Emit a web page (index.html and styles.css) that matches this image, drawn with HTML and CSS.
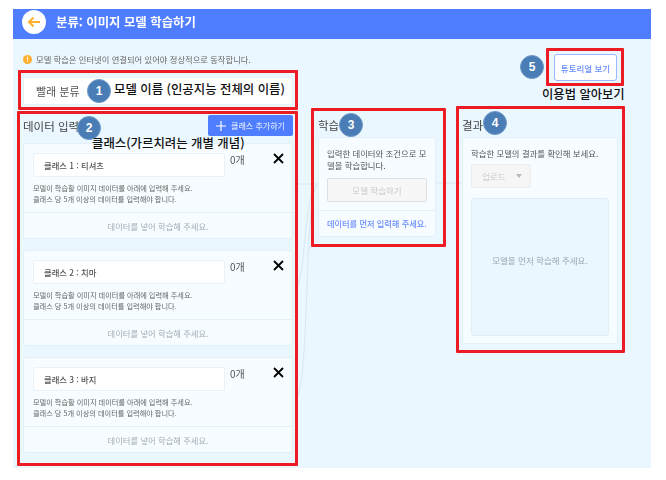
FILE: index.html
```html
<!DOCTYPE html>
<html lang="ko">
<head>
<meta charset="utf-8">
<title>분류: 이미지 모델 학습하기</title>
<link rel="stylesheet" href="styles.css">
</head>
<body>
<div class="page">
  <div class="app">
    <header class="topbar">
      <span class="back">
        <svg width="14" height="12" viewBox="0 0 14 12"><path d="M13 6H2M6.500 1.500 2 6l4.500 4.500" fill="none" stroke="#ffb02e" stroke-width="2"/></svg>
      </span>
      <h1 class="title">분류: 이미지 모델 학습하기</h1>
    </header>
    <div class="intro">
      <div class="intro-left">
        <p class="notice"><span class="warn">!</span>모델 학습은 인터넷이 연결되어 있어야 정상적으로 동작합니다.</p>
        <div class="name-card">빨래 분류</div>
      </div>
      <button class="tutorial">튜토리얼 보기</button>
    </div>
    <div class="columns">
      <section class="col-data">
        <div class="data-head">
          <h2 class="col-title">데이터 입력</h2>
          <button class="add"><svg width="10" height="10" viewBox="0 0 10 10"><path d="M5 0V10M0 5H10" stroke="#fff" stroke-width="1.200"/></svg>클래스 추가하기</button>
        </div>
        <article class="class-card">
          <div class="class-top">
            <div class="class-row">
              <div class="class-input">클래스 1 : 티셔츠</div>
              <span class="count">0개</span>
              <svg class="close" width="13" height="13" viewBox="0 0 13 13"><path d="M2 2l9 9M11 2l-9 9" stroke="#000" stroke-width="1.800"/></svg>
            </div>
            <p class="help">모델이 학습할 이미지 데이터를 아래에 입력해 주세요.<br>클래스 당 5개 이상의 데이터를 입력해야 합니다.</p>
          </div>
          <div class="class-foot">데이터를 넣어 학습해 주세요.</div>
        </article>
        <article class="class-card">
          <div class="class-top">
            <div class="class-row">
              <div class="class-input">클래스 2 : 치마</div>
              <span class="count">0개</span>
              <svg class="close" width="13" height="13" viewBox="0 0 13 13"><path d="M2 2l9 9M11 2l-9 9" stroke="#000" stroke-width="1.800"/></svg>
            </div>
            <p class="help">모델이 학습할 이미지 데이터를 아래에 입력해 주세요.<br>클래스 당 5개 이상의 데이터를 입력해야 합니다.</p>
          </div>
          <div class="class-foot">데이터를 넣어 학습해 주세요.</div>
        </article>
        <article class="class-card">
          <div class="class-top">
            <div class="class-row">
              <div class="class-input">클래스 3 : 바지</div>
              <span class="count">0개</span>
              <svg class="close" width="13" height="13" viewBox="0 0 13 13"><path d="M2 2l9 9M11 2l-9 9" stroke="#000" stroke-width="1.800"/></svg>
            </div>
            <p class="help">모델이 학습할 이미지 데이터를 아래에 입력해 주세요.<br>클래스 당 5개 이상의 데이터를 입력해야 합니다.</p>
          </div>
          <div class="class-foot">데이터를 넣어 학습해 주세요.</div>
        </article>
      </section>
      <section class="col-train">
        <h2 class="col-title col-head">학습</h2>
        <div class="panel">
          <div class="train-top">
            <p class="panel-text">입력한 데이터와 조건으로 모델을 학습합니다.</p>
            <button class="train-btn">모델 학습하기</button>
          </div>
          <p class="train-foot">데이터를 먼저 입력해 주세요.</p>
        </div>
      </section>
      <section class="col-result">
        <h2 class="col-title col-head">결과</h2>
        <div class="panel result-panel">
          <p class="panel-text">학습한 모델의 결과를 확인해 보세요.</p>
          <div class="upload">업로드<span class="caret"></span></div>
          <div class="result-area">모델을 먼저 학습해 주세요.</div>
        </div>
      </section>
    </div>
  </div>

  <svg class="edges" width="666" height="480" viewBox="0 0 666 480">
    <path d="M293 184H318M436 183H462M297 287C306 270 304 196 317 185M297 398C310 370 304 200 317 185" fill="none" stroke="#d8e6ee" stroke-width="1"/>
  </svg>

  <div class="redbox box-1"></div>
  <div class="redbox box-2"></div>
  <div class="redbox box-3"></div>
  <div class="redbox box-4"></div>
  <div class="redbox box-5"></div>

  <span class="badge badge-1">1</span>
  <span class="badge badge-2">2</span>
  <span class="badge badge-3">3</span>
  <span class="badge badge-4">4</span>
  <span class="badge badge-5">5</span>

  <span class="note note-model">모델 이름 (인공지능 전체의 이름)</span>
  <span class="note note-class">클래스(가르치려는 개별 개념)</span>
  <span class="note note-how">이용법 알아보기</span>
</div>
</body>
</html>
```
FILE: styles.css
```css
* { box-sizing: border-box; }
html, body { margin: 0; padding: 0; background: #fff; }
body { font-family: "Noto Sans CJK KR", "Noto Sans", sans-serif; color: #444; }
h1, h2, p { margin: 0; }
button { font-family: inherit; padding: 0; }

.page { position: relative; width: 666px; height: 480px; overflow: hidden; }

.app {
  position: absolute; left: 13px; top: 9px;
  width: 638px; height: 459px;
  background: #ebf7ff;
  filter: blur(0.35px);
}

.topbar {
  display: flex; align-items: center; gap: 10px;
  height: 30px; padding-left: 9px;
  background: #4f7dff;
}
.back {
  display: flex; align-items: center; justify-content: center;
  width: 24px; height: 24px; margin-top: -4px;
  border-radius: 50%; background: #fff;
}
.title { font-size: 12.400px; font-weight: 700; color: #fff; line-height: 30px; margin-top: -4px; }

.intro {
  display: flex; justify-content: space-between; align-items: flex-start;
  padding: 13px 34px 0 10px;
  height: 66px;
}
.intro-left { width: 270px; }
.notice {
  display: flex; align-items: center; gap: 4px;
  height: 14px;
  font-size: 8.300px; color: #666;
}
.warn {
  display: flex; align-items: center; justify-content: center;
  width: 9px; height: 9px; border-radius: 50%;
  background: #ffb02e; color: #fff; font-size: 7px; font-weight: 700;
}
.name-card {
  display: flex; align-items: center;
  height: 28px; margin-top: 11px; padding-left: 12px;
  background: #fff; border: 1px solid #e6f1f8; border-radius: 2px;
  font-size: 11px; color: #555;
}
.tutorial {
  width: 63px; height: 27px; margin-top: 2px;
  background: #fff; border: 1px solid #9db8ff; border-radius: 3px;
  font-size: 8.500px; color: #6a8fff; font-weight: 500;
}

.columns { display: flex; align-items: flex-start; padding-left: 10px; }
.col-data { width: 270px; margin-top: 10px; }
.col-train { width: 118px; margin-left: 25px; margin-top: 10px; }
.col-result { width: 156px; margin-left: 26px; margin-top: 10px; }

.col-title { font-size: 11.500px; font-weight: 400; color: #444; line-height: 20px; }
.col-head { height: 22px; }

.data-head {
  display: flex; justify-content: space-between; align-items: center;
  height: 21px; margin-bottom: 7px;
}
.add {
  display: flex; align-items: center; justify-content: center; gap: 5px;
  width: 85px; height: 21px;
  background: #4f7dff; border: 0; border-radius: 2px;
  color: #d6e2ff; font-size: 8px; font-weight: 500;
}

.class-card {
  height: 96px; margin-bottom: 11px;
  background: #f6fcff; border: 1px solid #e4f0f7; border-radius: 3px;
}
.class-top { height: 69px; padding: 9px 9px 0; border-bottom: 1px solid #e4f0f7; }
.class-row { display: flex; align-items: flex-start; }
.class-input {
  flex: none; display: flex; align-items: center;
  width: 192px; height: 24px; padding-left: 10px;
  background: #fff; border: 1px solid #e9f2f8; border-radius: 2px;
  font-size: 8.300px; font-weight: 500; color: #555;
}
.count { flex: none; margin: 1px 0 0 5px; font-size: 10px; line-height: 11px; color: #555; white-space: nowrap; }
.close { flex: none; margin-left: 27px; margin-top: -1px; }
.help { margin-top: 6px; font-size: 7.200px; line-height: 11px; color: #666; white-space: nowrap; }
.class-foot {
  display: flex; align-items: center; justify-content: center;
  height: 25px;
  font-size: 8.300px; color: #a3adb5;
}

.panel { background: #f6fcff; border: 1px solid #e4f0f7; border-radius: 3px; }
.train-top { padding: 9px 7px 0 8px; height: 73px; border-bottom: 1px solid #e4f0f7; }
.panel-text { font-size: 8.400px; line-height: 12px; color: #555; word-break: break-all; }
.train-btn {
  display: block; width: 100px; height: 24px; margin-top: 7px;
  background: #f7f7f7; border: 1px solid #dedede; border-radius: 2px;
  font-size: 8.500px; color: #c8c8c8;
}
.train-foot {
  height: 25px; padding-left: 8px;
  font-size: 8.200px; line-height: 25px; color: #6c8dff; font-weight: 500;
  white-space: nowrap;
}

.result-panel { height: 207px; padding: 9px 8px 0; }
.upload {
  display: flex; align-items: center; justify-content: space-between;
  width: 60px; height: 24px; margin-top: 5px; padding: 0 8px 0 10px;
  background: #f6f6f6; border: 1px solid #ececec; border-radius: 2px;
  font-size: 8.500px; color: #c9c9c9;
}
.caret {
  width: 0; height: 0;
  border-left: 3px solid transparent; border-right: 3px solid transparent;
  border-top: 4px solid #bbb;
}
.result-area {
  display: flex; align-items: center; justify-content: center;
  width: 138px; height: 138px; margin-top: 10px; padding-bottom: 14px;
  background: #ebf7ff; border: 1px solid #dfeef7; border-radius: 3px;
  font-size: 8.500px; color: #98a6b0;
}

.edges { position: absolute; left: 0; top: 0; pointer-events: none; }

.redbox { position: absolute; border: 3px solid #ed1c24; border-radius: 1px; }
.box-1 { left: 18px; top: 70px; width: 280px; height: 40px; }
.box-2 { left: 17px; top: 111px; width: 281px; height: 355px; }
.box-3 { left: 311px; top: 108px; width: 135px; height: 139px; }
.box-4 { left: 456px; top: 106px; width: 169px; height: 247px; }
.box-5 { left: 546px; top: 48px; width: 78px; height: 38px; }

.badge {
  position: absolute; width: 24px; height: 24px;
  display: flex; align-items: center; justify-content: center;
  border-radius: 50%; background: #4a7db5; border: 1px solid #6f9ac8;
  color: #fff; font: 700 12px "Liberation Sans", sans-serif;
}
.badge-1 { left: 87px; top: 79px; }
.badge-2 { left: 77px; top: 116px; }
.badge-3 { left: 339px; top: 113px; }
.badge-4 { left: 483px; top: 111px; }
.badge-5 { left: 520px; top: 55px; }

.note {
  position: absolute; white-space: nowrap;
  font-size: 12.400px; line-height: 14px; font-weight: 500; color: #111;
}
.note-model { left: 114px; top: 82px; }
.note-class { left: 92px; top: 136px; }
.note-how { left: 542px; top: 87px; font-size: 12.300px; }
```
